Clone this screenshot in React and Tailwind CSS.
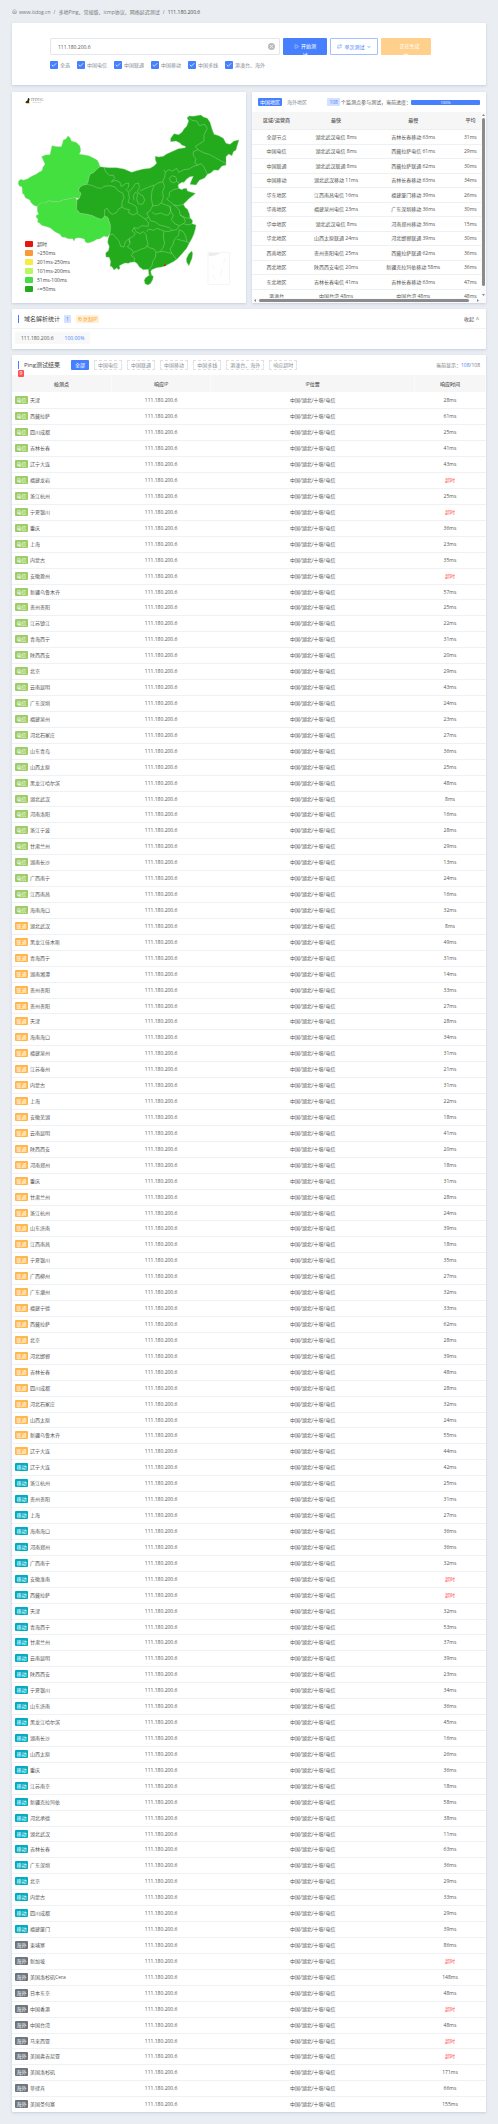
import React from "react";
import { Home, Play, Repeat, X, Check, Copy, ChevronsUp, ChevronDown } from "lucide-react";

const IP = "111.180.200.6";
const LOCATION = "中国/湖北/十堰/电信";

const telecom =
  "天津 28|西藏拉萨 61|四川成都 25|吉林长春 41|辽宁大连 43|福建龙岩 -|浙江杭州 25|宁夏银川 -|重庆 36|上海 23|内蒙古 35|安徽滁州 -|新疆乌鲁木齐 57|贵州贵阳 25|江苏镇江 22|青海西宁 31|陕西西安 20|北京 29|云南昆明 43|广东深圳 24|福建泉州 23|河北石家庄 27|山东青岛 36|山西太原 25|黑龙江哈尔滨 48|湖北武汉 8|河南洛阳 16|浙江宁波 28|甘肃兰州 29|湖南长沙 13|广西南宁 24|江西南昌 16|海南海口 32";
const unicom =
  "湖北武汉 8|黑龙江佳木斯 49|青海西宁 31|湖南湘潭 14|贵州贵阳 33|贵州贵阳 27|天津 28|海南海口 34|福建泉州 31|江苏泰州 21|内蒙古 31|上海 22|安徽芜湖 18|云南昆明 41|陕西西安 20|河南郑州 18|重庆 31|甘肃兰州 28|浙江杭州 24|山东济南 39|江西南昌 18|宁夏银川 35|广西柳州 27|广东潮州 32|福建宁德 33|西藏拉萨 62|北京 28|河北邯郸 39|吉林长春 48|四川成都 28|河北石家庄 32|山西太原 24|新疆乌鲁木齐 55|辽宁大连 44";
const mobile =
  "辽宁大连 42|浙江杭州 25|贵州贵阳 31|上海 27|海南海口 36|河南郑州 36|广西南宁 32|安徽淮南 -|西藏拉萨 -|天津 32|青海西宁 53|甘肃兰州 37|云南昆明 39|陕西西安 23|宁夏银川 34|山东济南 36|黑龙江哈尔滨 45|湖南长沙 16|山西太原 26|重庆 36|江苏南京 18|新疆克拉玛依 58|河北承德 38|湖北武汉 11|吉林长春 63|广东深圳 36|北京 29|内蒙古 33|四川成都 29|福建厦门 39";
const overseas =
  "柬埔寨 86|新加坡 -|美国洛杉矶Cera 148|日本东京 48|中国香港 -|中国台湾 48|马来西亚 -|美国弗吉尼亚 -|美国洛杉矶 171|菲律宾 66|美国圣何塞 155";

const parse = (text, tag, color) =>
  text.split("|").map((item) => {
    const [name, ms] = item.split(" ");
    return { name, ms, tag, color };
  });

const rows = [
  ...parse(telecom, "电信", "bg-[#9ccc65]"),
  ...parse(unicom, "联通", "bg-[#ffb64d]"),
  ...parse(mobile, "移动", "bg-[#00acc1]"),
  ...parse(overseas, "海外", "bg-[#6c757d]"),
];

const summary = [
  ["全部节点", "湖北武汉电信 8ms", "吉林长春移动 63ms", "31ms"],
  ["中国电信", "湖北武汉电信 8ms", "西藏拉萨电信 61ms", "29ms"],
  ["中国联通", "湖北武汉联通 8ms", "西藏拉萨联通 62ms", "30ms"],
  ["中国移动", "湖北武汉移动 11ms", "吉林长春移动 63ms", "34ms"],
  ["华东地区", "江西南昌电信 16ms", "福建厦门移动 39ms", "26ms"],
  ["华南地区", "福建泉州电信 23ms", "广东深圳移动 36ms", "30ms"],
  ["华中地区", "湖北武汉电信 8ms", "河南郑州移动 36ms", "15ms"],
  ["华北地区", "山西太原联通 24ms", "河北邯郸联通 39ms", "30ms"],
  ["西南地区", "贵州贵阳电信 25ms", "西藏拉萨联通 62ms", "36ms"],
  ["西北地区", "陕西西安电信 20ms", "新疆克拉玛依移动 58ms", "36ms"],
  ["东北地区", "吉林长春电信 41ms", "吉林长春移动 63ms", "47ms"],
  ["港澳台", "中国台湾 48ms", "中国台湾 48ms", "48ms"],
];

const legend = [
  ["超时", "bg-[#e8140e]"],
  [">250ms", "bg-[#f89a35]"],
  ["201ms-250ms", "bg-[#f7ed42]"],
  ["101ms-200ms", "bg-[#bdf75f]"],
  ["51ms-100ms", "bg-[#43e03f]"],
  ["<=50ms", "bg-[#24aa1d]"],
];

const card = "rounded-[1px] bg-white shadow-[0_1px_3px_rgba(69,90,130,0.22)]";

function Logo() {
  return (
    <div className="flex items-start gap-px">
      <svg viewBox="0 0 15 18" className="h-[6px] w-[5px]">
        <path d="M1 13 Q3 9 7 8 L9 1 L11 0 L14 3 L13 6 L12 12 L13 15 L4 15 Z" fill="#222" />
        <path d="M0 12 Q3 18 10 16 L14 15" fill="none" stroke="#e8b923" strokeWidth="2.5" />
      </svg>
      <div className="font-['Liberation_Serif',serif] text-[4px] leading-[4px] text-[#777]">
        ITDOG
        <svg viewBox="0 0 36 4" className="h-px w-[12px]">
          <path d="M0 2 H36" stroke="#aaa" strokeWidth="2" strokeDasharray="3 1" />
        </svg>
      </div>
    </div>
  );
}

function ChinaMap() {
  return (
    <svg viewBox="36 21 702 630" className="w-full [grid-area:1/1]" role="img" aria-label="中国地图">
      <g stroke="#8fd68b" strokeWidth="1.2" strokeLinejoin="round">
        <path
          fill="#43e03f"
          d="M55 296 L56 288 63 283 70 286 82 282 95 274 108 268 118 261 126 257 129 246 135 238 131 228 125 215 136 210 150 209 153 196 156 182 170 185 184 185 188 174 190 165 198 162 204 153 210 158 214 168 224 171 230 173 240 184 242 197 238 208 254 210 268 213 280 219 292 226 297 236 300 245 290 253 282 262 270 268 266 280 264 292 260 298 248 301 238 308 236 318 243 325 238 340 226 338 212 340 200 343 186 346 178 350 160 350 146 347 138 354 122 354 112 364 104 362 98 358 92 351 90 345 76 338 72 328 68 326 66 305 58 303 Z"
        />
        <path
          fill="#43e03f"
          d="M112 364 L122 354 138 354 146 347 160 350 178 350 186 346 200 343 212 340 226 338 231 345 229 372 240 385 262 388 278 392 290 398 304 403 312 396 314 392 324 398 328 410 331 420 331 435 329 448 322 456 312 453 300 461 290 463 280 469 264 474 256 471 254 463 246 460 236 458 226 460 222 468 218 461 205 461 195 457 186 456 180 448 165 440 150 428 136 424 125 421 118 413 113 412 114 402 108 396 110 390 116 388 112 378 Z"
        />
        <path
          fill="#24aa1d"
          d="M300 245 L325 248 350 248 372 252 395 262 410 257 430 252 450 250 462 243 470 235 466 224 466 214 476 216 490 214 500 207 520 198 535 191 556 188 556 184 545 180 540 174 528 168 512 170 512 160 522 146 536 149 546 142 552 132 560 124 566 108 561 98 568 93 580 94 602 90 612 97 622 100 630 112 636 132 642 148 656 152 670 160 678 175 690 178 702 168 717 165 712 180 708 195 700 200 696 212 686 207 678 215 678 240 666 243 655 256 642 255 632 264 622 268 614 279 598 286 588 300 570 298 574 287 580 274 570 275 560 282 552 292 545 292 534 300 536 310 546 314 550 311 560 310 562 318 574 322 586 325 580 331 568 340 560 348 550 358 556 368 562 372 568 386 570 398 578 407 576 416 588 420 586 432 582 446 576 460 568 474 560 490 546 506 534 520 520 530 505 538 496 542 485 546 470 548 455 554 452 560 455 570 447 572 445 553 430 554 418 546 412 536 405 531 392 532 385 535 375 534 366 538 358 542 360 550 356 554 350 549 342 555 336 545 330 543 332 530 328 517 318 516 317 504 325 497 328 485 323 472 325 460 329 448 331 435 331 420 328 410 324 398 314 392 312 396 304 403 290 398 278 392 262 388 240 385 229 372 231 345 238 340 243 325 236 318 238 308 248 301 260 298 264 292 266 280 270 268 282 262 290 253 Z"
        />
        <path fill="#24aa1d" d="M436 579 L444 573 452 569 460 574 458 584 452 595 444 600 435 596 433 586 Z" />
        <path fill="#24aa1d" d="M575 498 L578 505 576 520 571 532 567 542 560 532 559 522 566 507 Z" />
      </g>
      <g fill="none" stroke="#8fd68b" strokeWidth="1.5" strokeLinejoin="round">
        <path d="M260 298 L275 301 290 308 304 310 312 304 330 302 345 306 355 318 368 324 372 338 366 352 366 366 356 372 350 382 338 388 328 382 322 370 314 374 313 384 314 392" />
        <path d="M312 247 L318 262 330 272 340 270 344 280 334 290 348 286 360 292 364 305 376 296 386 294 386 306 378 314 386 322 388 340 384 352 398 358 408 364" />
        <path d="M386 320 L396 312 406 296 416 294 418 308 412 318 420 328 430 334 434 346 428 358 414 356 410 340 414 326 406 322 400 332 402 346" />
        <path d="M366 366 L376 372 388 374 386 384 400 390 412 384 410 366 408 364" />
        <path d="M412 386 L424 394 436 402 446 396 440 384 450 378 458 362 454 340 456 318 462 302 474 294 488 290 494 276 496 262 492 254" />
        <path d="M462 300 L446 306 432 312 420 318" />
        <path d="M328 448 L340 448 348 458 358 470 362 484 372 486 376 470 386 462 390 474" />
        <path d="M436 402 L446 414 444 424 426 422 414 430 402 428 396 438 406 446 400 454 388 460 390 476 382 486 396 494 400 502 394 512 404 520 402 531" />
        <path d="M402 428 L408 440 420 446 430 440 438 448 440 462 444 478 438 488 424 492 412 498 400 502" />
        <path d="M440 440 L446 432 460 436 470 430 482 434 492 438 490 458 494 474 488 490 480 500 468 502 462 492 448 488 440 482" />
        <path d="M446 396 L452 408 464 410 478 420 494 424 508 428 516 436 504 440 494 438" />
        <path d="M458 362 L472 362 484 354 492 358 510 364 512 378 506 390 496 390 482 384 466 388 456 382" />
        <path d="M488 290 L494 304 488 320 490 338 484 354" />
        <path d="M496 262 L506 254 518 258 530 250 536 262 552 254 568 252 580 244 594 240 604 236 612 246 622 268" />
        <path d="M508 280 L516 272 528 276 530 288 522 294 512 290 Z" />
        <path d="M528 288 L538 294 534 304" />
        <path d="M536 310 L520 314 508 322 508 334 500 342 510 350 522 360 536 362 550 358" />
        <path d="M510 364 L512 378 520 392 514 404 524 416 538 422 550 416 556 410 552 398 540 390 538 376 530 366 522 360" />
        <path d="M540 390 L556 398 570 400 M550 416 L564 420 576 416" />
        <path d="M516 436 L530 434 538 422 M538 434 L536 450 524 462 518 480 510 492 516 506 494 500 480 500" />
        <path d="M538 434 L550 440 558 456 560 470 568 474 M530 462 L544 466 560 470" />
        <path d="M468 502 L466 518 458 530 456 542 448 552 M516 506 L524 516 530 524" />
        <path d="M566 98 L576 106 590 108 598 122 614 118 622 130 612 150 612 168 596 178 586 184 594 194 612 204 628 208 642 216 660 226 678 236" />
        <path d="M594 194 L580 200 580 212 588 222 584 234 594 240" />
      </g>
      <path d="M491 540 L498 538 497 543 491 544 Z" fill="#e8140e" />
      <g fill="none" stroke="#f1f1f1" strokeWidth="2">
        <rect x="624" y="502" width="64" height="96" />
        <path d="M678 518 L670 535 M638 540 L642 552 M668 552 L660 572 M636 568 L646 584" />
      </g>
      <path d="M626 504 H662 L650 510 636 514 626 512 Z" fill="#ececec" />
    </svg>
  );
}

function CheckItem({ label }) {
  return (
    <label className="flex items-center gap-[2px] whitespace-nowrap text-[#868e96]">
      <span className="grid">
        <input
          type="checkbox"
          defaultChecked
          className="h-[8px] w-[8px] appearance-none rounded-[1px] bg-[#4680ff] [grid-area:1/1]"
        />
        <Check className="pointer-events-none m-auto h-[6px] w-[6px] text-white [grid-area:1/1]" strokeWidth={3} />
      </span>
      {label}
    </label>
  );
}

function SearchCard() {
  return (
    <section className={`${card} h-[62px] pt-[15px] pr-[55px] pl-[38px]`}>
      <form className="flex h-[17px]" onSubmit={(e) => e.preventDefault()}>
        <div className="flex min-w-0 flex-1 items-center rounded-[1px] border border-[#e3e6ea] pr-[4px] pl-[7px]">
          <input
            aria-label="IP"
            defaultValue={IP}
            className="min-w-0 flex-1 text-[5px] leading-[8px] text-[#555] outline-none"
          />
          <button type="button" aria-label="清除" className="grid h-[7px] w-[7px] place-items-center rounded-full bg-[#bbb] text-white">
            <X className="h-[5px] w-[5px]" strokeWidth={3} />
          </button>
        </div>
        <button className="ml-[3px] w-[44px] overflow-hidden rounded-[1px] bg-[#4680ff] px-[10px] pt-[4px] leading-[9px] text-white">
          <span className="block h-[13px]">
            <Play className="mr-[2px] inline h-[5px] w-[5px] align-middle" />
            开始测试
          </span>
        </button>
        <button
          type="button"
          className="ml-[3px] flex w-[48px] items-center justify-center gap-[2px] rounded-[1px] border border-[#a3bfff] whitespace-nowrap text-[#4680ff]"
        >
          <Repeat className="h-[5px] w-[5px]" />
          单次测试
          <ChevronDown className="h-[4px] w-[4px]" strokeWidth={4} />
        </button>
        <button
          type="button"
          className="ml-[3px] w-[50px] overflow-hidden rounded-[1px] bg-[#ffd08c] px-[11px] pt-[4px] leading-[9px] text-white"
        >
          <span className="block h-[13px]">
            <span className="inline-block w-[7px]" />
            正在生成中
          </span>
        </button>
      </form>
      <div className="mt-[6px] flex gap-[7px]">
        {["全选", "中国电信", "中国联通", "中国移动", "中国多线", "港澳台、海外"].map((l) => (
          <CheckItem key={l} label={l} />
        ))}
      </div>
    </section>
  );
}

function MapCard() {
  return (
    <section className={`${card} grid`}>
      <ChinaMap />
      <div className="flex flex-col justify-between pt-[6px] pb-[10px] pl-[13px] [grid-area:1/1]">
        <Logo />
        <ul>
          {legend.map(([label, color]) => (
            <li key={label} className="flex h-[9px] items-center gap-[4px] text-[#444]">
              <span className={`h-[6px] w-[8px] rounded-[1px] ${color}`} />
              {label}
            </li>
          ))}
        </ul>
      </div>
    </section>
  );
}

function SummaryCard() {
  return (
    <section className={`${card} flex flex-col overflow-hidden`}>
      <div className="flex h-[20px] items-center pr-[6px] pl-[6px] whitespace-nowrap">
        <button className="h-[8px] rounded-[1px] bg-[#4680ff] px-[2px] leading-[8px] text-white">中国地区</button>
        <button className="ml-[5px] leading-[8px] text-[#868e96]">海外地区</button>
        <span className="ml-auto h-[8px] rounded-[1px] bg-[#d5e2ff] px-[2px] leading-[8px] text-[#4680ff]">108</span>
        <span className="ml-[1px] text-[#555]">个监测点参与测试，当前进度：</span>
        <div className="h-[5px] w-[69px] rounded-[1px] bg-[#4680ff] text-center text-[4px] leading-[5px] text-white">
          100%
        </div>
      </div>
      <div className="grid min-h-0 flex-1 grid-cols-[1fr_5px] grid-rows-[1fr_5px]">
        <div className="h-[186px] overflow-hidden">
          <table className="w-[102%] table-fixed text-center text-[#555]">
            <colgroup>
              <col className="w-[21%]" />
              <col className="w-[30%]" />
              <col className="w-[36%]" />
              <col className="w-[13%]" />
            </colgroup>
            <thead>
              <tr className="h-[17px] border-b border-[#eceef0] bg-[#f6f6f6]">
                {["区域/运营商", "最快", "最慢", "平均"].map((h) => (
                  <th key={h} className="p-0 font-medium whitespace-nowrap">{h}</th>
                ))}
              </tr>
            </thead>
            <tbody>
              {summary.map((r) => (
                <tr key={r[0]} className="h-[15px] border-b border-[#eef0f2] even:h-[14px]">
                  {r.map((c, i) => (
                    <td key={i} className="p-0 whitespace-nowrap">{c}</td>
                  ))}
                </tr>
              ))}
            </tbody>
          </table>
        </div>
        <div className="flex flex-col items-center gap-[2px] bg-[#fafafa] py-[2px]">
          <svg viewBox="0 0 6 4" className="h-[2px] w-[3px]"><path d="M3 0 L6 4 H0 Z" fill="#888" /></svg>
          <div className="w-[3px] flex-1 rounded-full bg-[#8b8b8b]" />
          <svg viewBox="0 0 6 4" className="mt-[6px] h-[2px] w-[3px]"><path d="M3 4 L6 0 H0 Z" fill="#888" /></svg>
        </div>
        <div className="flex items-center gap-[3px] bg-[#fafafa] px-[2px]">
          <svg viewBox="0 0 4 6" className="h-[3px] w-[2px]"><path d="M0 3 L4 0 V6 Z" fill="#888" /></svg>
          <div className="h-[3px] flex-1 rounded-full bg-[#8b8b8b]" />
          <svg viewBox="0 0 4 6" className="ml-[5px] h-[3px] w-[2px]"><path d="M4 3 L0 0 V6 Z" fill="#888" /></svg>
        </div>
        <div className="bg-[#fafafa]" />
      </div>
    </section>
  );
}

function StatsCard() {
  return (
    <section className={`${card} h-[40px]`}>
      <div className="flex h-[20px] items-center border-b border-[#f1f2f4] pr-[6px] pl-[6px]">
        <span className="h-[8px] w-px bg-[#4680ff]" />
        <h2 className="ml-[5px] text-[6px] text-[#444]">域名解析统计</h2>
        <span className="ml-[4px] rounded-[1px] bg-[#d5e2ff] px-[2px] leading-[8px] text-[#4680ff]">1</span>
        <button className="ml-[5px] flex h-[8px] items-center gap-px rounded-[1px] bg-[#fff0d9] px-[2px] leading-[8px] text-[#ffa21d]">
          <Copy className="h-[4px] w-[4px]" strokeWidth={3} />
          复制IP
        </button>
        <button className="ml-auto flex items-center gap-px text-[#444]">
          收起
          <ChevronsUp className="h-[5px] w-[5px]" />
        </button>
      </div>
      <div className="px-[3px] pt-[3px]">
        <span className="inline-flex h-[12px] items-center gap-[11px] rounded-[1px] bg-[#f8f8f8] px-[6px] text-[#555]">
          {IP}
          <span className="text-[#4680ff]">100.00%</span>
        </span>
      </div>
    </section>
  );
}

function ResultsCard() {
  return (
    <section className={card}>
      <div className="relative flex h-[20px] items-center pr-[6px] pl-[6px] whitespace-nowrap">
        <span className="h-[8px] w-px bg-[#4680ff]" />
        <h2 className="ml-[5px] text-[6px] text-[#444]">Ping测试结果</h2>
        <span className="absolute top-[15px] left-[6px] z-10 h-[7px] w-[6px] rounded-[1px] bg-[#ff5252] text-center text-[5px] leading-[7px] text-white">
          9
        </span>
        <div className="ml-[11px] flex gap-[5px]">
          <button className="h-[10px] rounded-[1px] bg-[#4680ff] px-[4px] text-white">全部</button>
          {["中国电信", "中国联通", "中国移动", "中国多线", "港澳台、海外", "响应超时"].map((l) => (
            <button key={l} className="h-[10px] rounded-[1px] border border-dashed border-[#dfe1e4] px-[3px] leading-[8px] text-[#868e96]">
              {l}
            </button>
          ))}
        </div>
        <span className="ml-auto text-[#777]">
          当前显示：<span className="text-[#4680ff]">108</span>/108
        </span>
      </div>
      <table className="w-full table-fixed text-center text-[#555]">
        <colgroup>
          <col className="w-[21%]" />
          <col className="w-[21%]" />
          <col className="w-[43%]" />
          <col className="w-[15%]" />
        </colgroup>
        <thead>
          <tr className="h-[17px] bg-[#f6f6f6]">
            {["检测点", "响应IP", "IP位置", "响应时间"].map((h) => (
              <th key={h} className="border-r border-[#f9fafb] p-0 font-medium">{h}</th>
            ))}
          </tr>
        </thead>
        <tbody className="[&>tr:nth-child(13n)]:h-[15px]">
          {rows.map((r, i) => (
            <tr key={i} className="h-[16px] border-b border-[#eff1f3] last:border-b-0">
              <td className="p-0 pl-[3px]">
                <div className="flex items-center gap-[2px] whitespace-nowrap">
                  <span className={`h-[8px] w-[13px] rounded-[1px] text-center leading-[8px] text-white ${r.color}`}>{r.tag}</span>
                  {r.name}
                </div>
              </td>
              <td className="p-0">{IP}</td>
              <td className="p-0">{LOCATION}</td>
              <td className="p-0">{r.ms === "-" ? <span className="text-[#ff5252]">超时</span> : `${r.ms}ms`}</td>
            </tr>
          ))}
        </tbody>
      </table>
    </section>
  );
}

export default function App() {
  return (
    <div className="bg-[#eaeef3] px-[12px] pb-[12px] font-['Open_Sans','Noto_Sans_CJK_SC',sans-serif] text-[5px] leading-[8px]">
      <nav className="flex h-[23px] items-center gap-[3px] text-[#777]">
        <a href="#home" className="flex items-center gap-[2px]">
          <Home className="h-[5px] w-[5px]" />
          www.itdog.cn
        </a>
        <span>/</span>
        <a href="#ping">多地Ping、常规版、icmp协议、网络延迟测试</a>
        <span>/</span>
        <span className="text-[#444]">{IP}</span>
      </nav>
      <main className="flex flex-col gap-[6px]">
        <SearchCard />
        <div className="mt-px grid grid-cols-2 gap-[6px]">
          <MapCard />
          <SummaryCard />
        </div>
        <StatsCard />
        <ResultsCard />
      </main>
    </div>
  );
}
